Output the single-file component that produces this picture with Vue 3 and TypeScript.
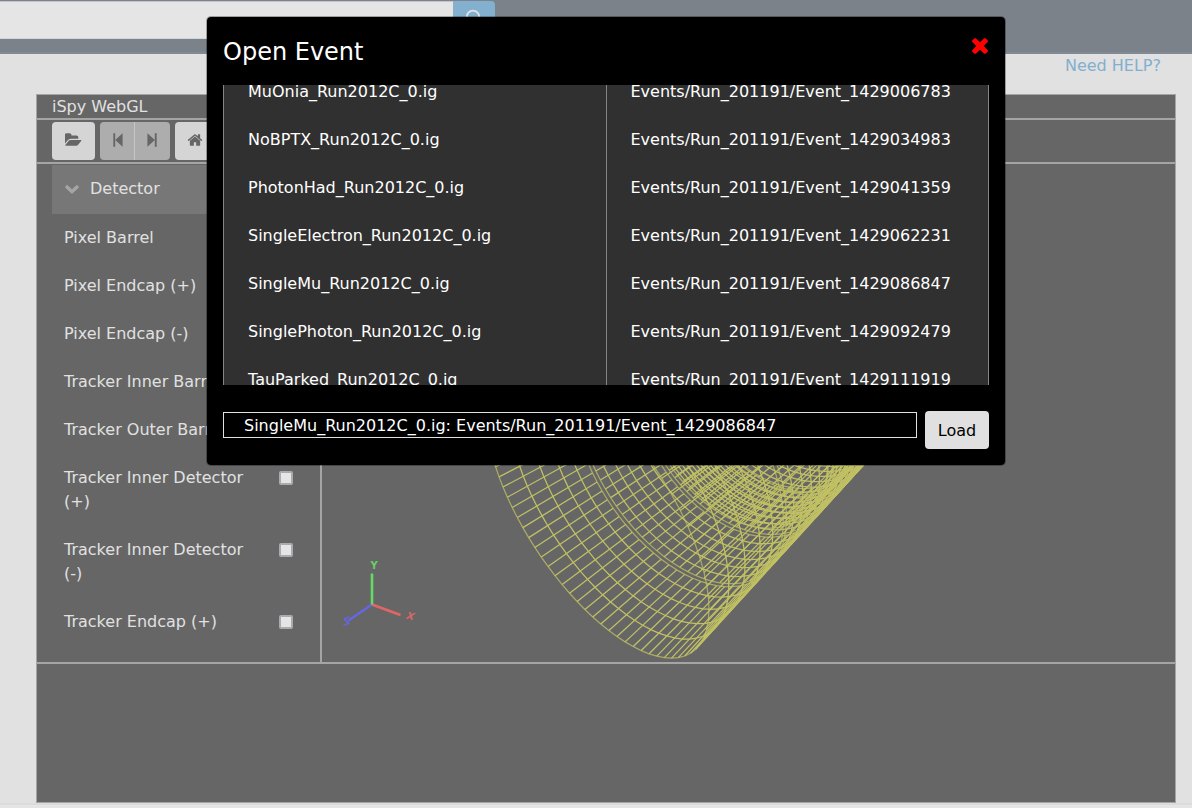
<script setup lang="ts">
type Point = [number, number]

interface Segment { x1: number; y1: number; x2: number; y2: number }

const detectorItems: string[] = [
  'Pixel Barrel',
  'Pixel Endcap (+)',
  'Pixel Endcap (-)',
  'Tracker Inner Barrel',
  'Tracker Outer Barrel',
  'Tracker Inner Detector (+)',
  'Tracker Inner Detector (-)',
  'Tracker Endcap (+)',
]

const files: string[] = [
  'MuOnia_Run2012C_0.ig',
  'NoBPTX_Run2012C_0.ig',
  'PhotonHad_Run2012C_0.ig',
  'SingleElectron_Run2012C_0.ig',
  'SingleMu_Run2012C_0.ig',
  'SinglePhoton_Run2012C_0.ig',
  'TauParked_Run2012C_0.ig',
]

const events: string[] = [
  'Events/Run_201191/Event_1429006783',
  'Events/Run_201191/Event_1429034983',
  'Events/Run_201191/Event_1429041359',
  'Events/Run_201191/Event_1429062231',
  'Events/Run_201191/Event_1429086847',
  'Events/Run_201191/Event_1429092479',
  'Events/Run_201191/Event_1429111919',
]

// Perspective camera looking at the centre of the barrel
const camera = { focal: 493.05, azimuth: 0.6361, elevation: 0.514, distance: 17.0134, cx: 748.5, cy: 411.07 }
const sa = Math.sin(camera.azimuth)
const ca = Math.cos(camera.azimuth)
const se = Math.sin(camera.elevation)
const ce = Math.cos(camera.elevation)

function project(radius: number, phi: number, z: number): Point {
  const x = radius * Math.cos(phi)
  const y = radius * Math.sin(phi)
  const depth = camera.distance - (sa * ce * x + se * y + ca * ce * z)
  const k = camera.focal / depth
  return [
    camera.cx + k * (ca * x - sa * z),
    camera.cy - k * (-se * sa * x + ce * y - se * ca * z),
  ]
}

const PHI_STEPS = 72
const PHI_START = 3.341
const phiAt = (i: number): number => PHI_START + (i * 2 * Math.PI) / PHI_STEPS

function ring(radius: number, z: number): string {
  return Array.from({ length: PHI_STEPS + 1 }, (_, i) =>
    project(radius, phiAt(i), z).map((v) => v.toFixed(2)).join(','),
  ).join(' ')
}

// Barrel wheels: ring positions along the beam axis, per layer radius
const outer = 4.07
const inner = 3.82
const endWheel = [3.94, 4.08, 4.54, 5.06, 5.64, 6.22, 6.88]
const midWheel = [1.5, 1.88, 2.31, 2.74, 3.16, 3.6, 3.94]
const centralWheel = [0, 0.35, 0.71, 1.06, 1.34]
const outerZ = [...new Set([...endWheel, ...midWheel, ...centralWheel])]

// Rings on the faces of a wheel are drawn fainter than the tower boundaries
const faces = [1.34, 1.5, 3.94, 4.08, 6.88]

const rings = [
  ...outerZ.flatMap((z) => [
    { points: ring(outer, z), face: faces.includes(z) },
    { points: ring(outer, -z), face: faces.includes(z) },
  ]),
  ...centralWheel.flatMap((z) => [
    { points: ring(inner, z), face: faces.includes(z) },
    { points: ring(inner, -z), face: faces.includes(z) },
  ]),
]

function generators(radius: number, from: number, to: number): Segment[] {
  return Array.from({ length: PHI_STEPS }, (_, i) => {
    const [x1, y1] = project(radius, phiAt(i), from)
    const [x2, y2] = project(radius, phiAt(i), to)
    return { x1, y1, x2, y2 }
  })
}

const segments: Segment[] = [
  ...generators(outer, 6.88, 4.08),
  ...generators(outer, 3.94, 1.5),
  ...generators(outer, 1.34, -1.34),
  ...generators(inner, 1.34, -1.34),
  ...generators(outer, -1.5, -3.94),
  ...generators(outer, -4.08, -6.88),
]
</script>

<template>
  <div class="page">
    <header class="topbar">
      <div class="search-input"></div>
      <div class="search-button">
        <svg viewBox="0 0 20 20" width="20" height="20">
          <circle cx="9" cy="9.8" r="6.2" />
          <path d="M13.5 14.3 L18 19" />
        </svg>
      </div>
    </header>

    <div class="help"><a>Need HELP?</a></div>

    <section class="viewer">
      <div class="viewer-title">iSpy WebGL</div>
      <div class="toolbar">
        <button class="tool wide">
          <svg class="fa" viewBox="0 0 1820 1792" width="16.6" height="16">
            <path d="M1815 952q0 31-31 66l-336 396q-43 51-120.5 86.5t-143.5 35.5h-1088q-34 0-60.5-13t-26.5-43q0-31 31-66l336-396q43-51 120.5-86.5t143.5-35.5h1088q34 0 60.5 13t26.5 43zm-343-344v160h-832q-94 0-197 47.5t-164 119.5l-337 396-5 6q0-4-.5-12.5t-.5-12.5v-960q0-92 66-158t158-66h320q92 0 158 66t66 158v32h544q92 0 158 66t66 158z" />
          </svg>
        </button>
        <div class="tool-group">
          <button class="tool disabled first">
            <svg class="fa" viewBox="0 0 10 14" width="10" height="14">
              <path d="M0.3 0.2h1.9v13.6h-1.9zM2.2 7L9.6 0.2v13.6z" />
            </svg>
          </button>
          <button class="tool disabled last">
            <svg class="fa" viewBox="0 0 10 14" width="10" height="14">
              <path d="M7.8 0.2h1.9v13.6h-1.9zM7.8 7L0.4 0.2v13.6z" />
            </svg>
          </button>
        </div>
        <button class="tool home">
          <svg class="fa" viewBox="0 0 1792 1792" width="16" height="16">
            <path d="M1472 992v480q0 26-19 45t-45 19h-384v-384h-256v384h-384q-26 0-45-19t-19-45v-480q0-1 .5-3t.5-3l575-474 575 474q1 2 1 6zm223-69l-62 74q-8 9-21 11h-3q-13 0-21-7l-692-577-692 577q-12 8-24 7-13-2-21-11l-62-74q-8-10-7-23.5t11-21.5l719-599q32-26 76-26t76 26l244 204v-195q0-14 9-23t23-9h192q14 0 23 9t9 23v408l219 182q10 8 11 21.5t-7 23.5z" />
          </svg>
        </button>
      </div>

      <div class="workspace">
        <aside class="tree">
          <div class="tree-head">
            <svg viewBox="0 0 16 12" width="16" height="12"><path d="M2 3 L8 8.7 L14 3" /></svg>
            <span>Detector</span>
          </div>
          <label v-for="item in detectorItems" :key="item" class="tree-item">
            <span class="tree-label">{{ item }}</span>
            <span class="check"></span>
          </label>
        </aside>
        <svg class="canvas" viewBox="322 164 853 498" width="853" height="498">
          <g class="wire">
            <polyline v-for="(r, i) in rings" :key="i" :class="{ face: r.face }" :points="r.points" />
            <line v-for="(s, i) in segments" :key="'s' + i" :x1="s.x1" :y1="s.y1" :x2="s.x2" :y2="s.y2" />
          </g>
          <g class="axes">
            <line class="z" x1="372" y1="604.5" x2="348.5" y2="620.5" />
            <line class="x" x1="372" y1="604.5" x2="400.5" y2="615" />
            <line class="y" x1="372" y1="604.5" x2="372" y2="573.5" />
            <text class="ty" x="374.2" y="568.5">Y</text>
            <text class="tx" transform="translate(409 619.3) rotate(12) skewX(-12)">X</text>
            <text class="tz" transform="translate(346.8 625) rotate(-20) skewX(-20) scale(-1 1)">Z</text>
          </g>
        </svg>
      </div>
      <div class="collections"></div>
    </section>
    <footer class="page-foot"></footer>

    <div class="modal">
      <div class="modal-head">
        <h3>Open Event</h3>
        <svg class="close" viewBox="302 366 1188 1188" width="16" height="16">
          <path d="M1490 1322q0 40-28 68l-136 136q-28 28-68 28t-68-28l-294-294-294 294q-28 28-68 28t-68-28l-136-136q-28-28-28-68t28-68l294-294-294-294q-28-28-28-68t28-68l136-136q28-28 68-28t68 28l294 294 294-294q28-28 68-28t68 28l136 136q28 28 28 68t-28 68l-294 294 294 294q28 28 28 68z" />
        </svg>
      </div>
      <div class="browser">
        <div class="column files">
          <div v-for="file in files" :key="file" class="entry">{{ file }}</div>
        </div>
        <div class="column events">
          <div v-for="event in events" :key="event" class="entry">{{ event }}</div>
        </div>
      </div>
      <div class="modal-foot">
        <div class="selected">SingleMu_Run2012C_0.ig: Events/Run_201191/Event_1429086847</div>
        <button class="load">Load</button>
      </div>
    </div>
  </div>
</template>

<style>
body {
  margin: 0;
  overflow: hidden;
}
</style>

<style scoped>
.page {
  position: relative;
  box-sizing: border-box;
  width: 1192px;
  height: 808px;
  overflow: hidden;
  background: #e1e1e1;
  color: #e1e1e1;
  font: 16px/24px "DejaVu Sans", Verdana, sans-serif;
}

.topbar {
  display: flex;
  align-items: flex-start;
  box-sizing: border-box;
  height: 54px;
  padding-top: 1px;
  background: #7b8289;
  border-bottom: 2px solid #7f8a94;
}

.search-input {
  box-sizing: border-box;
  width: 453px;
  height: 38px;
  background: #e5e5e5;
  border-top: 1px solid #c4c4cb;
  border-bottom: 1px solid #cdd6d8;
}

.search-button {
  box-sizing: border-box;
  width: 42px;
  height: 38px;
  padding: 6px 0 0 11px;
  background: #84b0d0;
  border-radius: 0 4px 4px 0;
}

.search-button svg {
  display: block;
  fill: none;
  stroke: #e1e5e9;
  stroke-width: 1.8;
}

.help {
  height: 40px;
  padding-right: 31px;
  text-align: right;
  color: #82afce;
  line-height: 23px;
}

.viewer {
  box-sizing: border-box;
  width: 1140px;
  height: 709px;
  margin-left: 36px;
  background: #666;
  border: 1px solid #a5a5a5;
}

.viewer-title {
  height: 23px;
  padding-left: 15px;
  line-height: 23px;
  border-bottom: 2px solid #a5a5a5;
}

.toolbar {
  display: flex;
  gap: 5px;
  height: 40px;
  padding: 2px 0 0 15px;
  border-bottom: 2px solid #a5a5a5;
}

.tool-group {
  display: flex;
}

.tool {
  display: flex;
  align-items: center;
  justify-content: center;
  box-sizing: border-box;
  height: 38px;
  padding: 0;
  border: 0;
  border-radius: 4px;
  background: #d5d5d5;
}

.tool.wide {
  width: 43px;
}

.tool.home {
  width: 39px;
}

.tool.disabled {
  width: 35px;
  background: #adadad;
}

.tool.first {
  padding-left: 2px;
  border-right: 1px solid #c6c6c6;
  border-radius: 4px 0 0 4px;
}

.tool.last {
  padding-right: 1px;
  border-radius: 0 4px 4px 0;
}

.fa {
  display: block;
  margin-bottom: 2px;
  fill: #666;
}

.workspace {
  display: flex;
  height: 498px;
  border-bottom: 2px solid #a5a5a5;
}

.tree {
  box-sizing: border-box;
  width: 285px;
  padding: 1px 15px 0;
  overflow: hidden;
  border-right: 2px solid #a5a5a5;
}

.tree-head {
  display: flex;
  align-items: center;
  gap: 10px;
  height: 49px;
  padding-left: 12px;
  line-height: 24px;
  background: #777;
}

.tree-head span {
  margin-bottom: 1px;
}

.tree-head svg {
  margin-bottom: 1px;
  fill: none;
  stroke: #a5a5a5;
  stroke-width: 3.4;
}

.tree-item {
  display: flex;
  justify-content: space-between;
  padding: 12px;
}

.tree-label {
  width: 195px;
}

.check {
  box-sizing: border-box;
  width: 14px;
  height: 14px;
  margin-top: 5px;
  background: #e5e5e5;
  border: 2px solid #abaab1;
  border-radius: 2px;
}

.canvas {
  display: block;
}

.wire {
  fill: none;
  stroke: #c1c164;
  stroke-width: 1.25;
}

.wire .face {
  stroke-opacity: 0.75;
}

.axes line {
  stroke-width: 2.6;
}

.axes text {
  font: bold 10px "DejaVu Sans", sans-serif;
  text-anchor: middle;
}

.axes .x { stroke: #e36666; }
.axes .y { stroke: #66d966; }
.axes .z { stroke: #6666e3; }
.axes .tx { fill: #d96666; }
.axes .ty { fill: #66cf66; }
.axes .tz { fill: #6666d9; }

.collections {
  height: 138px;
}

.page-foot {
  height: 5px;
  background: #e5e5e5;
  border-top: 2px solid #dcdcdc;
}

.modal {
  position: absolute;
  top: 16px;
  left: 206px;
  box-sizing: border-box;
  width: 800px;
  height: 450px;
  padding: 0 16px;
  background: #000;
  background-clip: padding-box;
  border: 1px solid rgba(0, 0, 0, 0.3);
  border-radius: 5px;
  color: #fff;
}

.modal-head {
  display: flex;
  justify-content: space-between;
  height: 68px;
}

.modal-head h3 {
  margin: 17px 0 0;
  font-size: 24px;
  font-weight: normal;
  line-height: 36px;
}

.close {
  margin: 21px 1px 0 0;
  fill: #f00;
}

.browser {
  display: flex;
  box-sizing: border-box;
  height: 300px;
  overflow: hidden;
  background: #303030;
  border: solid #858585;
  border-width: 0 1px;
}

.column {
  box-sizing: border-box;
  margin-top: -17px;
  padding-left: 24px;
}

.files {
  width: 383px;
  border-right: 1px solid #858585;
}

.events {
  padding-left: 23.5px;
}

.entry {
  height: 24px;
  padding: 12px 0;
}

.modal-foot {
  display: flex;
  gap: 8px;
  padding-top: 26px;
}

.selected {
  box-sizing: border-box;
  width: 694px;
  height: 26px;
  margin-top: 1px;
  padding-left: 20px;
  line-height: 26px;
  border: 1px solid #e0e0e0;
}

.load {
  width: 64px;
  height: 38px;
  padding: 2px 0 0;
  border: 0;
  border-radius: 4px;
  background: #e0e0e0;
  color: #000;
  font: 16px/24px "DejaVu Sans", Verdana, sans-serif;
}
</style>
